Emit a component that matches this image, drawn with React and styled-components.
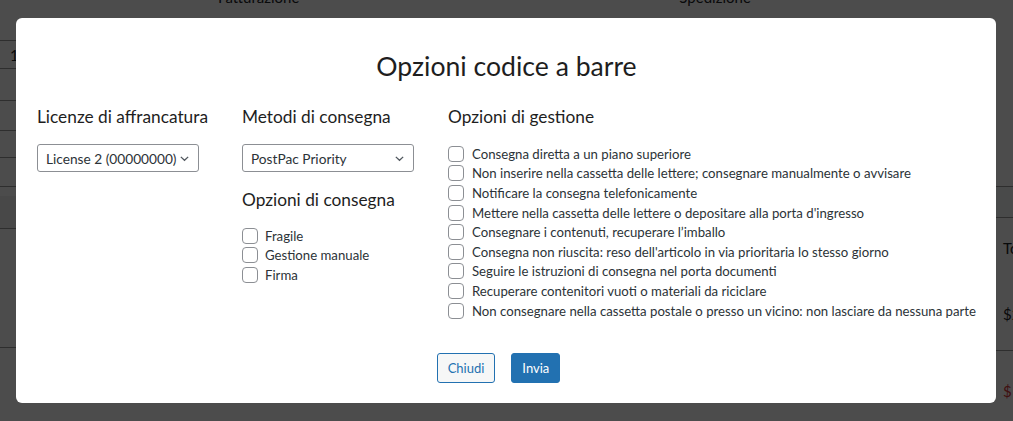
import React from 'react'
import styled, {createGlobalStyle} from 'styled-components'

const FONT = `"Lato", "Noto Sans", sans-serif`

const GlobalStyle = createGlobalStyle`
  html, body {
    margin: 0;
    padding: 0;
    background: #fff;
  }
  * {
    box-sizing: border-box;
  }
`

/* page behind the dialog */
const Page = styled.div`
  position: relative;
  width: 1013px;
  height: 421px;
  overflow: hidden;
  background: #fff;
  font-family: ${FONT};
  color: #1d2327;
`

const TopLabels = styled.div`
  display: flex;
  height: 52px;
  margin-top: -12px;
  font-size: 15px;
  & > span:first-child {
    margin-left: 218px;
  }
  & > span:last-child {
    margin-left: 380px;
  }
`

const BackTables = styled.div`
  display: flex;
  justify-content: space-between;
`

const BackColumn = styled.div`
  width: ${p => p.$w}px;
  display: flex;
  flex-direction: column;
`

const BackRow = styled.div`
  height: ${p => p.$h}px;
  border-top: ${p => (p.$line ? '1px solid #9a9a9a' : 'none')};
  background: ${p => p.$bg || 'transparent'};
  color: ${p => p.$color || '#1d2327'};
  font-size: 15px;
  display: flex;
  align-items: center;
  padding: 0 10px;
  white-space: nowrap;
`

const Backdrop = styled.div`
  position: absolute;
  inset: 0;
  background: rgba(0, 0, 0, 0.7);
  display: flex;
  padding: 18px 18px 18px 16px;
`

/* dialog */
const Modal = styled.div`
  flex: 1;
  background: #fff;
  border-radius: 6px;
  display: flex;
  flex-direction: column;
  padding: 31px 20px 20px 21px;
  color: #1e1e1e;
`

const Title = styled.h2`
  margin: 0;
  font-size: 26.6px;
  line-height: 34px;
  font-weight: 400;
  text-align: center;
`

const Columns = styled.div`
  display: grid;
  grid-template-columns: 205px 206px 1fr;
  margin-top: 22px;
`

const Column = styled.div`
  display: flex;
  flex-direction: column;
  align-items: flex-start;
`

const Heading = styled.h3`
  margin: 0 0 15px;
  font-size: 17.3px;
  line-height: 24px;
  font-weight: 400;
  white-space: nowrap;
`

const SubHeading = styled(Heading)`
  margin-top: 16px;
  margin-bottom: 14px;
`

const SelectBox = styled.div`
  width: ${p => p.$w}px;
  height: 28px;
  border: 1px solid #8c8f94;
  border-radius: 3px;
  display: flex;
  align-items: center;
  justify-content: space-between;
  padding: 0 8px 0 8px;
  font-size: 13.7px;
  color: #2c3338;
  white-space: nowrap;
`

const Chevron = styled.svg`
  width: 11px;
  height: 11px;
  flex: none;
`

const CheckList = styled.div`
  display: flex;
  flex-direction: column;
`

const CheckRow = styled.label`
  display: flex;
  align-items: center;
  gap: ${p => p.$gap}px;
  height: 19.6px;
  font-size: 13.2px;
  color: #2c3338;
  white-space: nowrap;
`

const Box = styled.span`
  width: 16px;
  height: 16px;
  border: 1px solid #8c8f94;
  border-radius: 4px;
  background: #fff;
  flex: none;
`

const Footer = styled.div`
  margin-top: auto;
  display: flex;
  justify-content: center;
  gap: 16px;
  padding-right: 16px;
`

const Button = styled.button`
  height: 30px;
  padding: 0 10px;
  font-family: ${FONT};
  font-size: 13px;
  border-radius: 3px;
  border: 1px solid #2271b1;
  background: ${p => (p.$primary ? '#2271b1' : '#f6f7f7')};
  color: ${p => (p.$primary ? '#fff' : '#2271b1')};
  cursor: pointer;
`

function Select({value, width}) {
  return (
    <SelectBox $w={width}>
      <span>{value}</span>
      <Chevron viewBox="0 0 12 12">
        <path d="M2 4.2 6 8 10 4.2" fill="none" stroke="#50575e" strokeWidth="1.4" />
      </Chevron>
    </SelectBox>
  )
}

function Check({label, gap}) {
  return (
    <CheckRow $gap={gap}>
      <Box />
      <span>{label}</span>
    </CheckRow>
  )
}

const delivery = ['Fragile', 'Gestione manuale', 'Firma']

const handling = [
  'Consegna diretta a un piano superiore',
  'Non inserire nella cassetta delle lettere; consegnare manualmente o avvisare',
  'Notificare la consegna telefonicamente',
  "Mettere nella cassetta delle lettere o depositare alla porta d'ingresso",
  'Consegnare i contenuti, recuperare l’imballo',
  "Consegna non riuscita: reso dell'articolo in via prioritaria lo stesso giorno",
  'Seguire le istruzioni di consegna nel porta documenti',
  'Recuperare contenitori vuoti o materiali da riciclare',
  'Non consegnare nella cassetta postale o presso un vicino: non lasciare da nessuna parte',
]

function Background() {
  return (
    <>
      <TopLabels>
        <span>Fatturazione</span>
        <span>Spedizione</span>
      </TopLabels>
      <BackTables>
        <BackColumn $w={480}>
          <BackRow $h={28} $line>10</BackRow>
          <BackRow $h={32} $line />
          <BackRow $h={30} $line />
          <BackRow $h={27} $line />
          <BackRow $h={29} $line />
          <BackRow $h={10} $line />
          <BackRow $h={32} $bg="#f0f0f1" />
          <BackRow $h={119} $line />
          <BackRow $h={40} $line />
        </BackColumn>
        <BackColumn $w={20}>
          <BackRow $h={146} />
          <BackRow $h={31} $line $bg="#f6f7f7" />
          <BackRow $h={60} $line>Totale</BackRow>
          <BackRow $h={73}>$25</BackRow>
          <BackRow $h={80} $line $color="#d63638">$</BackRow>
        </BackColumn>
      </BackTables>
    </>
  )
}

export default function App() {
  return (
    <>
      <GlobalStyle />
      <Page>
        <Background />
        <Backdrop>
          <Modal>
            <Title>Opzioni codice a barre</Title>
            <Columns>
              <Column>
                <Heading>Licenze di affrancatura</Heading>
                <Select value="License 2 (00000000)" width={162} />
              </Column>
              <Column>
                <Heading>Metodi di consegna</Heading>
                <Select value="PostPac Priority" width={172} />
                <SubHeading>Opzioni di consegna</SubHeading>
                <CheckList>
                  {delivery.map(item => (
                    <Check key={item} label={item} gap={7} />
                  ))}
                </CheckList>
              </Column>
              <Column>
                <Heading>Opzioni di gestione</Heading>
                <CheckList>
                  {handling.map(item => (
                    <Check key={item} label={item} gap={8} />
                  ))}
                </CheckList>
              </Column>
            </Columns>
            <Footer>
              <Button>Chiudi</Button>
              <Button $primary>Invia</Button>
            </Footer>
          </Modal>
        </Backdrop>
      </Page>
    </>
  )
}
